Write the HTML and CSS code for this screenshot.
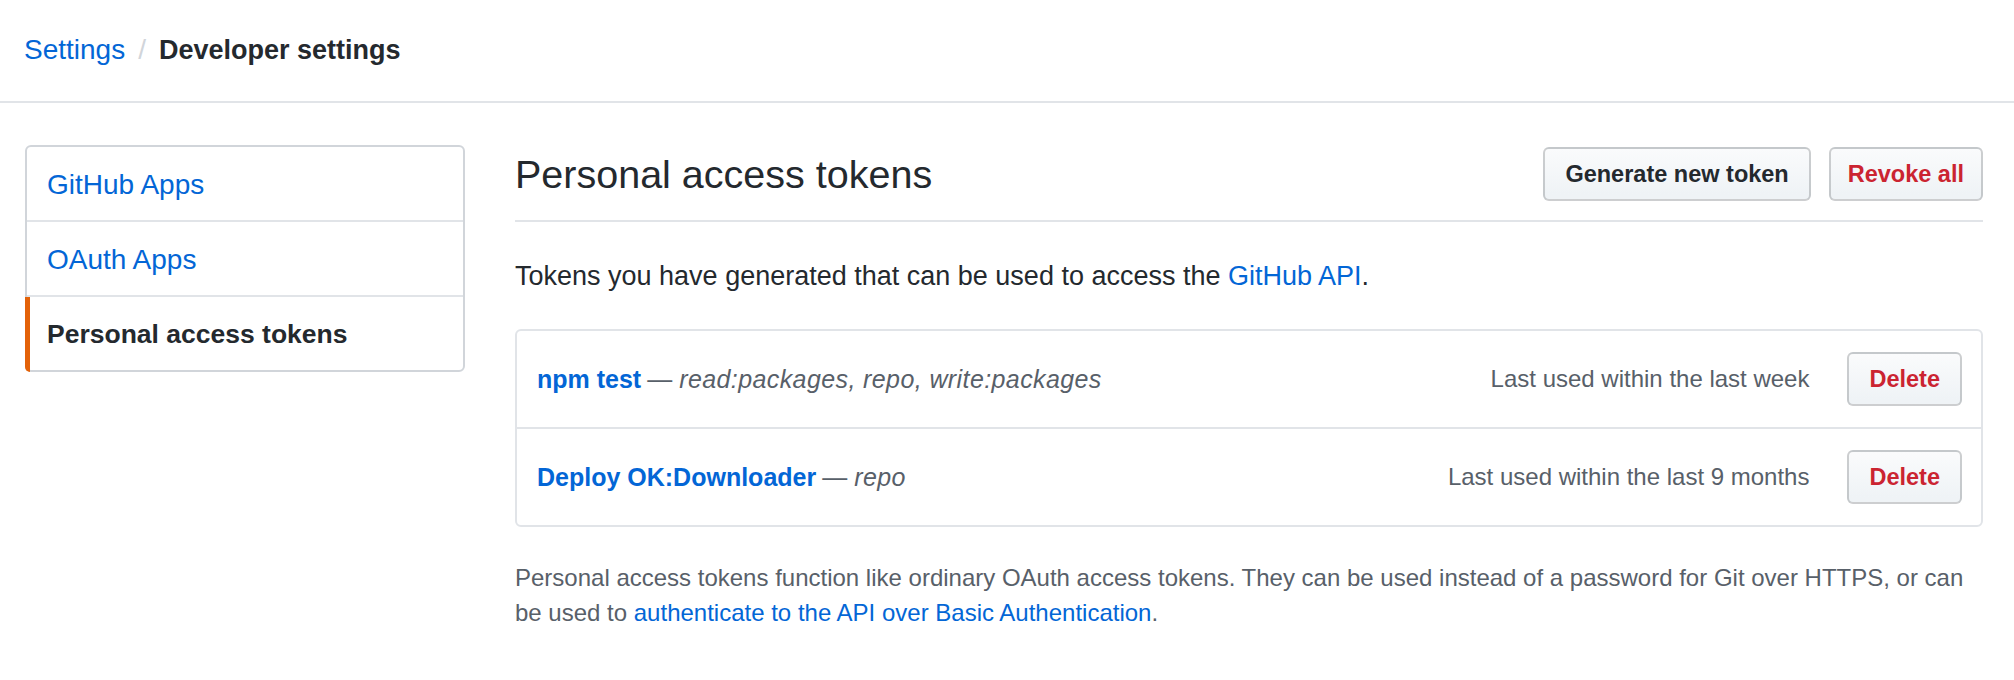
FILE: index.html
```html
<!DOCTYPE html>
<html lang="en">
<head>
<meta charset="utf-8">
<title>Personal access tokens</title>
<link rel="stylesheet" href="styles.css">
</head>
<body>
<header class="page-head">
  <nav class="crumbs">
    <a class="crumb-link" href="#">Settings</a><span class="crumb-sep">/</span><strong class="crumb-current">Developer settings</strong>
  </nav>
</header>
<div class="layout">
  <nav class="menu">
    <a class="menu-item" href="#">GitHub Apps</a>
    <a class="menu-item" href="#">OAuth Apps</a>
    <a class="menu-item selected" href="#">Personal access tokens</a>
  </nav>
  <main class="content">
    <div class="subhead">
      <h2 class="subhead-title">Personal access tokens</h2>
      <div class="actions">
        <a class="btn" href="#">Generate new token</a>
        <button class="btn btn-danger btn-revoke" type="button">Revoke all</button>
      </div>
    </div>
    <p class="lead">Tokens you have generated that can be used to access the <a class="link" href="#">GitHub API</a>.</p>
    <div class="token-list">
      <div class="token-row">
        <div class="token-desc"><a class="token-name" href="#">npm test</a><span class="dash">—</span><em class="scopes">read:packages, repo, write:packages</em></div>
        <span class="last-used">Last used within the last week</span>
        <button class="btn btn-danger" type="button">Delete</button>
      </div>
      <div class="token-row">
        <div class="token-desc"><a class="token-name" href="#">Deploy OK:Downloader</a><span class="dash">—</span><em class="scopes">repo</em></div>
        <span class="last-used">Last used within the last 9 months</span>
        <button class="btn btn-danger" type="button">Delete</button>
      </div>
    </div>
    <p class="note">Personal access tokens function like ordinary OAuth access tokens. They can be used instead of a password for Git over HTTPS, or can be used to <a class="link" href="#">authenticate to the API over Basic Authentication</a>.</p>
  </main>
</div>
</body>
</html>
```
FILE: styles.css
```css
body {
  margin: 0;
  font-family: "Liberation Sans", Arial, sans-serif;
  color: #24292e;
  background: #fff;
}

.page-head {
  padding: 30px 24px 31px;
  border-bottom: 2px solid #e1e4e8;
}

.crumbs {
  display: flex;
  align-items: baseline;
  font-size: 28px;
  line-height: 40px;
}

.crumb-link {
  color: #0366d6;
  text-decoration: none;
}

.crumb-sep {
  color: #d1d5da;
  padding: 0 13px;
}

.crumb-current {
  font-weight: 700;
  font-size: 27px;
}

.layout {
  display: flex;
  gap: 50px;
  padding: 42px 31px 0 25px;
}

.menu {
  width: 440px;
  flex: none;
  align-self: flex-start;
  box-sizing: border-box;
  border: 2px solid #d1d5da;
  border-radius: 6px;
}

.menu-item {
  display: block;
  height: 73px;
  line-height: 75px;
  padding: 0 20px;
  font-size: 28px;
  color: #0366d6;
  text-decoration: none;
}

.menu-item + .menu-item {
  border-top: 2px solid #e1e4e8;
}

.menu-item.selected {
  position: relative;
  color: #24292e;
  font-weight: 700;
  font-size: 26.5px;
}

.menu-item.selected::before {
  content: "";
  position: absolute;
  left: -2px;
  top: 0;
  bottom: -2px;
  width: 5px;
  background: #e36209;
  border-bottom-left-radius: 6px;
}

.content {
  flex: 1;
  min-width: 0;
}

.subhead {
  display: flex;
  align-items: center;
  padding: 2px 0 19px;
  border-bottom: 2px solid #e1e4e8;
}

.subhead-title {
  flex: 1;
  margin: 0;
  font-size: 39.5px;
  font-weight: 400;
  line-height: 54px;
}

.actions {
  display: flex;
  gap: 18px;
}

.btn {
  display: inline-flex;
  align-items: center;
  height: 54px;
  box-sizing: border-box;
  padding: 0 20px;
  border: 2px solid rgba(27, 31, 35, 0.2);
  border-radius: 6px;
  background: linear-gradient(180deg, #fafbfc 0%, #eff3f6 90%);
  font-family: "Liberation Sans", Arial, sans-serif;
  font-size: 23.5px;
  font-weight: 700;
  color: #24292e;
  text-decoration: none;
  cursor: pointer;
}

.btn-danger {
  color: #cb2431;
}

.btn-revoke {
  padding: 0 17px;
}

.lead {
  margin: 34px 0 33px;
  font-size: 27px;
  line-height: 40px;
}

.link {
  color: #0366d6;
  text-decoration: none;
}

.token-list {
  border: 2px solid #e1e4e8;
  border-radius: 6px;
}

.token-row {
  display: flex;
  align-items: center;
  height: 96px;
  padding: 0 19px 0 20px;
}

.token-row + .token-row {
  border-top: 2px solid #e1e4e8;
}

.token-desc {
  flex: 1;
  font-size: 25px;
}

.token-name {
  font-weight: 700;
  color: #0366d6;
  text-decoration: none;
}

.dash {
  margin-left: 6px;
  color: #586069;
}

.scopes {
  margin-left: 7px;
  color: #586069;
  font-style: italic;
  letter-spacing: 0.4px;
}

.last-used {
  margin-right: 38px;
  font-size: 24px;
  color: #586069;
}

.note {
  margin: 33px 0 0;
  font-size: 24px;
  line-height: 35px;
  color: #586069;
}
```
